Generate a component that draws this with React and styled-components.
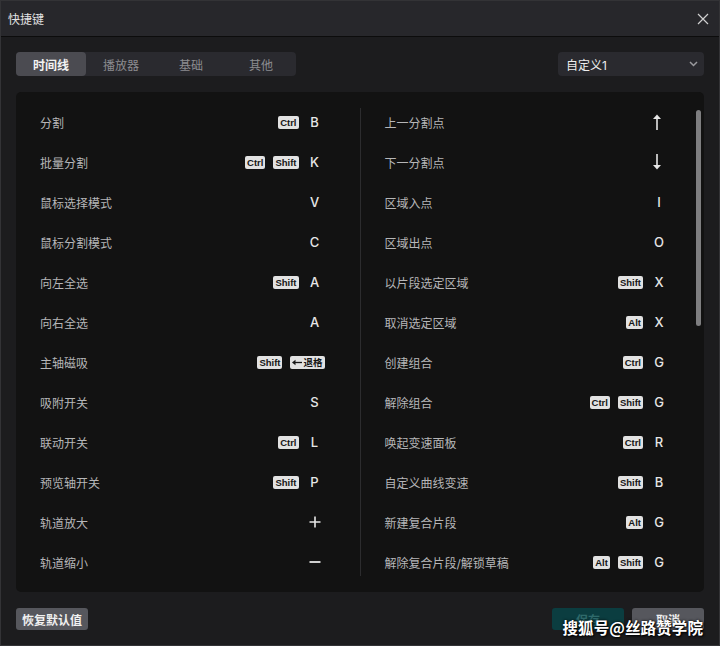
import React from "react";
import styled, { createGlobalStyle } from "styled-components";

const Global = createGlobalStyle`
  html, body { margin: 0; padding: 0; background: #1c1c1e; }
  * { box-sizing: border-box; }
  body { font-family: "Inter", "Noto Sans CJK SC", sans-serif; }
`;

const Window = styled.div`
  position: relative;
  width: 720px;
  height: 646px;
  background: #1c1c1e;
  border: 1px solid #333336;
  display: flex;
  flex-direction: column;
  overflow: hidden;
`;

const TitleBar = styled.div`
  height: 36px;
  flex: none;
  background: #27272b;
  border-bottom: 1px solid #0c0c0c;
  display: flex;
  align-items: center;
  justify-content: space-between;
  padding: 0 8px 0 7px;
  color: #e2e2e2;
  font-size: 12px;
`;

const CloseBtn = styled.div`
  width: 16px;
  height: 16px;
  display: flex;
  align-items: center;
  justify-content: center;
`;

const Body = styled.div`
  flex: 1;
  display: flex;
  flex-direction: column;
  padding: 15px 15px 15px 15px;
  gap: 16px;
`;

const TopRow = styled.div`
  display: flex;
  justify-content: space-between;
  align-items: center;
  height: 24px;
`;

const Tabs = styled.div`
  display: flex;
  background: #2a2a2f;
  border-radius: 4px;
  width: 280px;
  height: 24px;
`;

const Tab = styled.div`
  width: 70px;
  height: 24px;
  display: flex;
  align-items: center;
  justify-content: center;
  font-size: 12px;
  border-radius: 4px;
  background: ${(p) => (p.$active ? "#4b4b51" : "transparent")};
  color: ${(p) => (p.$active ? "#f2f2f2" : "#8c8c90")};
  font-weight: ${(p) => (p.$active ? 700 : 400)};
`;

const Select = styled.div`
  width: 146px;
  height: 24px;
  background: #2a2a2f;
  border-radius: 4px;
  display: flex;
  align-items: center;
  justify-content: space-between;
  padding: 0 6px 0 8px;
  color: #eeeeee;
  font-size: 12px;
`;

const Panel = styled.div`
  position: relative;
  flex: 1;
  background: #121212;
  border-radius: 5px;
  display: grid;
  grid-template-columns: 1fr 1px 1fr;
  padding-top: 10px;
  overflow: hidden;
`;

const Column = styled.div`
  display: flex;
  flex-direction: column;
`;

const Divider = styled.div`
  background: #2c2c2e;
  margin: 6px 0 16px;
`;

const Row = styled.div`
  height: 40px;
  display: flex;
  align-items: center;
  padding: 0 35px 0 24px;
`;

const Label = styled.div`
  flex: 1;
  font-size: 12px;
  color: #b6b6b8;
`;

const Keys = styled.div`
  display: flex;
  align-items: center;
  gap: 8px;
`;

const Chip = styled.span`
  height: 13px;
  padding: 0 2px;
  background: #e2e2e2;
  color: #161616;
  border-radius: 2px;
  font-family: "Liberation Sans", "Noto Sans CJK SC", sans-serif;
  font-size: 9.5px;
  font-weight: 700;
  line-height: 13px;
  display: inline-flex;
  align-items: center;
  gap: 1px;
`;

const Letter = styled.span`
  width: 20px;
  margin-left: -2px;
  text-align: center;
  font-family: "Inter", "Liberation Sans", sans-serif;
  font-size: 13px;
  font-weight: 500;
  color: #e6e6e6;
  display: flex;
  justify-content: center;
  align-items: center;
  height: 16px;
`;

const Scrollbar = styled.div`
  position: absolute;
  right: 3px;
  top: 18px;
  width: 5px;
  height: 216px;
  border-radius: 3px;
  background: #7e7e80;
`;

const Footer = styled.div`
  height: 22px;
  display: flex;
  align-items: center;
  justify-content: space-between;
`;

const BtnGroup = styled.div`
  display: flex;
  gap: 8px;
`;

const Button = styled.div`
  height: 22px;
  min-width: 72px;
  padding: 0 6px;
  border-radius: 3px;
  background: ${(p) => (p.$primary ? "#0b3d40" : "#56575d")};
  color: ${(p) => (p.$primary ? "#2f6a6b" : "#f0f0f0")};
  font-size: 12px;
  font-weight: 700;
  display: flex;
  align-items: center;
  justify-content: center;
`;

const Watermark = styled.div`
  position: absolute;
  right: 16px;
  bottom: 7px;
  color: #ffffff;
  font-size: 15.5px;
  font-weight: 700;
  font-family: "Noto Sans CJK SC", sans-serif;
  text-shadow: 1px 1px 2px #000, 0 0 3px #000;
  letter-spacing: 0.1px;
`;

const Arrow = ({ up }) => (
  <svg width="10" height="16" viewBox="0 0 10 16" style={{ marginLeft: -5 }}>
    {up ? (
      <>
        <line x1="5" y1="3" x2="5" y2="16" stroke="#e6e6e6" strokeWidth="1.6" />
        <path d="M1 5 L5 0.5 L9 5 Z" fill="#e6e6e6" />
      </>
    ) : (
      <>
        <line x1="5" y1="0" x2="5" y2="13" stroke="#e6e6e6" strokeWidth="1.6" />
        <path d="M1 11 L5 15.5 L9 11 Z" fill="#e6e6e6" />
      </>
    )}
  </svg>
);

const Plus = () => (
  <svg width="12" height="12" viewBox="0 0 12 12">
    <path d="M6 0.5 V11.5 M0.5 6 H11.5" stroke="#e6e6e6" strokeWidth="1.6" />
  </svg>
);

const Minus = () => (
  <svg width="12" height="12" viewBox="0 0 12 12">
    <path d="M0.5 6 H11.5" stroke="#e6e6e6" strokeWidth="1.8" />
  </svg>
);

const BackArrow = () => (
  <svg width="10" height="7" viewBox="0 0 10 7">
    <path d="M10 3.5 H2.5" stroke="#161616" strokeWidth="1.3" />
    <path d="M0 3.5 L3.5 0.8 L3.5 6.2 Z" fill="#161616" />
  </svg>
);

const left = [
  { label: "分割", chips: ["Ctrl"], key: "B" },
  { label: "批量分割", chips: ["Ctrl", "Shift"], key: "K" },
  { label: "鼠标选择模式", chips: [], key: "V" },
  { label: "鼠标分割模式", chips: [], key: "C" },
  { label: "向左全选", chips: ["Shift"], key: "A" },
  { label: "向右全选", chips: [], key: "A" },
  { label: "主轴磁吸", chips: ["Shift", "BACK"], key: null },
  { label: "吸附开关", chips: [], key: "S" },
  { label: "联动开关", chips: ["Ctrl"], key: "L" },
  { label: "预览轴开关", chips: ["Shift"], key: "P" },
  { label: "轨道放大", chips: [], key: "PLUS" },
  { label: "轨道缩小", chips: [], key: "MINUS" },
];

const right = [
  { label: "上一分割点", chips: [], key: "UP" },
  { label: "下一分割点", chips: [], key: "DOWN" },
  { label: "区域入点", chips: [], key: "I" },
  { label: "区域出点", chips: [], key: "O" },
  { label: "以片段选定区域", chips: ["Shift"], key: "X" },
  { label: "取消选定区域", chips: ["Alt"], key: "X" },
  { label: "创建组合", chips: ["Ctrl"], key: "G" },
  { label: "解除组合", chips: ["Ctrl", "Shift"], key: "G" },
  { label: "唤起变速面板", chips: ["Ctrl"], key: "R" },
  { label: "自定义曲线变速", chips: ["Shift"], key: "B" },
  { label: "新建复合片段", chips: ["Alt"], key: "G" },
  { label: "解除复合片段/解锁草稿", chips: ["Alt", "Shift"], key: "G" },
];

const renderKey = (k) => {
  if (!k) return null;
  if (k === "UP") return <Letter><Arrow up /></Letter>;
  if (k === "DOWN") return <Letter><Arrow /></Letter>;
  if (k === "PLUS") return <Letter><Plus /></Letter>;
  if (k === "MINUS") return <Letter><Minus /></Letter>;
  return <Letter>{k}</Letter>;
};

const ShortcutRow = ({ item }) => (
  <Row>
    <Label>{item.label}</Label>
    <Keys>
      {item.chips.map((c, i) =>
        c === "BACK" ? (
          <Chip key={i}>
            <BackArrow />
            退格
          </Chip>
        ) : (
          <Chip key={i}>{c}</Chip>
        )
      )}
      {renderKey(item.key)}
    </Keys>
  </Row>
);

export default function App() {
  return (
    <>
      <Global />
      <Window>
        <TitleBar>
          <span>快捷键</span>
          <CloseBtn>
            <svg width="12" height="12" viewBox="0 0 12 12">
              <path d="M1 1 L11 11 M11 1 L1 11" stroke="#cfcfcf" strokeWidth="1.2" />
            </svg>
          </CloseBtn>
        </TitleBar>
        <Body>
          <TopRow>
            <Tabs>
              <Tab $active>时间线</Tab>
              <Tab>播放器</Tab>
              <Tab>基础</Tab>
              <Tab>其他</Tab>
            </Tabs>
            <Select>
              <span>自定义1</span>
              <svg width="9" height="6" viewBox="0 0 9 6">
                <path d="M1 1 L4.5 4.5 L8 1" stroke="#9a9a9e" strokeWidth="1.5" fill="none" />
              </svg>
            </Select>
          </TopRow>
          <Panel>
            <Column>
              {left.map((it, i) => (
                <ShortcutRow key={i} item={it} />
              ))}
            </Column>
            <Divider />
            <Column>
              {right.map((it, i) => (
                <ShortcutRow key={i} item={it} />
              ))}
            </Column>
            <Scrollbar />
          </Panel>
          <Footer>
            <Button>恢复默认值</Button>
            <BtnGroup>
              <Button $primary>保存</Button>
              <Button>取消</Button>
            </BtnGroup>
          </Footer>
        </Body>
        <Watermark>搜狐号@丝路赞学院</Watermark>
      </Window>
    </>
  );
}
